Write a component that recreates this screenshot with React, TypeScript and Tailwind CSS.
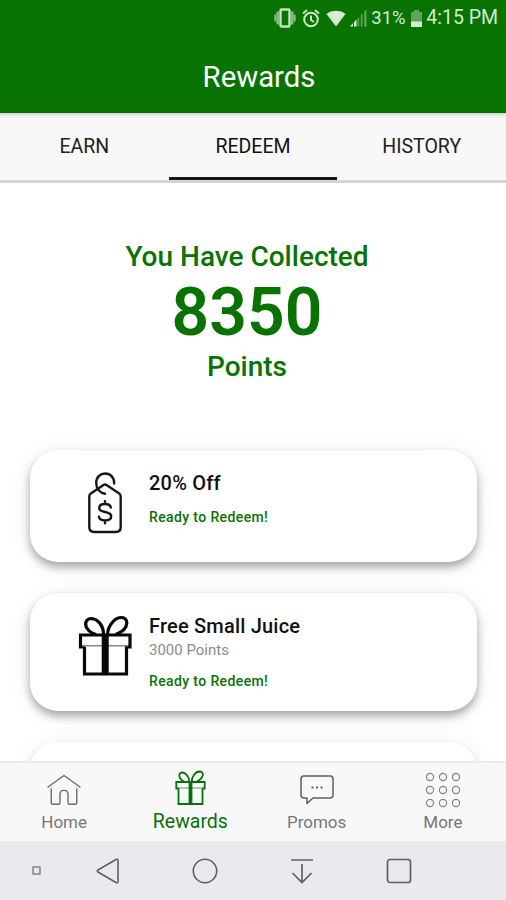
import React from 'react';

const tabs = [
  { id: 'earn', label: 'EARN' },
  { id: 'redeem', label: 'REDEEM' },
  { id: 'history', label: 'HISTORY' }
];

const rewards = [
  { id: 1, title: '20% Off', points: '', icon: 'tag', height: 'h-28' },
  { id: 2, title: 'Free Small Juice', points: '3000 Points', icon: 'gift', height: 'h-[118px]' }
];

const TagIcon: React.FC = () => (
  <svg width="34" height="62" viewBox="0 0 34 62" fill="none" stroke="#161616" strokeWidth="2.4" strokeLinecap="round" strokeLinejoin="round">
    <path d="M15.500 13 2.800 21.400c-1 .7-1.500 1.600-1.500 2.800V55c0 3.200 1.800 5 5 5h21.400c3.200 0 5-1.800 5-5V24.200c0-1.200-.5-2.100-1.500-2.800L18.500 13c-1.200-.8-1.800-.8-3 0Z" />
    <path d="M17 21.800c-5-1-8.800-5-8.800-10.800 0-5.800 3.900-9.500 9-9.500 5 0 9 3.700 9 10" />
    <path d="M22.800 35.500c-.4-2.300-2.500-3.500-5.800-3.500-3.500 0-5.800 1.500-5.800 4 0 5.700 12 2.300 12 8.300 0 2.700-2.500 4.200-6.200 4.200s-5.600-1.200-6.100-3.700M17 29.300V32M17 48.500v2.700" />
  </svg>
);

const GiftIcon: React.FC = () => (
  <svg width="54" height="62" viewBox="0 0 54 62" fill="none" stroke="#080808" strokeWidth="3.2">
    <path d="M7 32H2.500V20h49.500v12h-5" />
    <path d="M6.500 32v27h42V32" />
    <path d="M4 30.800h46" stroke="#888" strokeWidth="1.400" />
    <path d="M27.200 20v39" strokeWidth="7" />
    <path d="M25.500 19.500C25.500 10 19.500 4 13.500 3.500 8 3.500 6.500 8.500 8.500 12.500c2 3.500 5.500 6 9.500 7M29.500 19.500C30 10 37 2.500 43.500 2.500c5 0 6.500 5 4.500 9C46 15.500 42 18 37.500 19.500" />
  </svg>
);

const SmallGiftIcon: React.FC = () => (
  <svg width="31" height="36" viewBox="0 0 31 36" fill="none" stroke="#08700a" strokeWidth="1.800">
    <path d="M4 18.500H1.300v-6.500h28.400v6.500H27" />
    <path d="M3.500 18.500V34h24V18.500" />
    <path d="M3 18h25" stroke="#5d9c5b" strokeWidth="1" />
    <path d="M15.500 12v22" strokeWidth="3.800" />
    <path d="M14.300 12C14.300 7 11 3 7.500 2.500 4.500 2.300 3.500 5.500 5 8c1.200 2 3 3.300 5 4M16.700 12c0-6 4-10.500 8-10.500 3 0 4 3 2.500 5.500C25.900 9.200 24 11 21 12" />
  </svg>
);

const HomeIcon: React.FC = () => (
  <svg width="34" height="32" viewBox="0 0 34 32" fill="none" stroke="#6c6c6c" strokeWidth="1.400" strokeLinecap="round" strokeLinejoin="round">
    <path d="M1 13 17 1.500 33 13" />
    <path d="M4.200 15v13.500c0 1.200.6 1.800 1.800 1.800h5.500c1 0 1.500-.6 1.500-1.800v-8c0-5.500 8-5.500 8 0v8c0 1.200.5 1.800 1.500 1.800H28c1.200 0 1.800-.6 1.800-1.800V15" />
  </svg>
);

const ChatIcon: React.FC = () => (
  <svg width="36" height="32" viewBox="0 0 36 32" fill="none" stroke="#5f5f5f" strokeWidth="1.500" strokeLinejoin="round">
    <path d="M5 2h26c2 0 3 1 3 3v16c0 2-1 3-3 3H14l-6 5.500V24H5c-2 0-3-1-3-3V5c0-2 1-3 3-3Z" />
    <path d="M12.500 13.500h2M17 13.500h2M21.500 13.500h2" strokeWidth="2" />
  </svg>
);

const MoreIcon: React.FC = () => (
  <svg width="36" height="36" viewBox="0 0 36 36" fill="none" stroke="#858585" strokeWidth="1.200">
    {[5, 18, 31].map((y) => [5, 18, 31].map((x) => <circle key={`${x}-${y}`} cx={x} cy={y} r="3.600" />))}
  </svg>
);

const navItems = [
  { id: 'home', label: 'Home', icon: <HomeIcon /> },
  { id: 'rewards', label: 'Rewards', icon: <SmallGiftIcon />, active: true },
  { id: 'promos', label: 'Promos', icon: <ChatIcon /> },
  { id: 'more', label: 'More', icon: <MoreIcon /> }
];

const StatusBar: React.FC = () => (
  <div className="flex h-9 items-center justify-end pr-2 text-[19px] text-[#d5ead0]">
    <svg width="22" height="20" viewBox="0 0 22 20" fill="none" stroke="#c6e2c0">
      <rect x="6.500" y="1.500" width="9" height="17" rx="1" strokeWidth="2.400" />
      <path d="M3.700 3.500v13M18.300 3.500v13" strokeWidth="2.600" opacity=".65" />
      <path d="M1.300 6.500v7M20.700 6.500v7" strokeWidth="2" opacity=".65" />
    </svg>
    <svg className="ml-1.5" width="18" height="19" viewBox="0 0 18 19" fill="none" stroke="#cde6c8" strokeWidth="2">
      <circle cx="9" cy="10.500" r="6.800" />
      <path d="M1 4.500 5 1M17 4.500 13 1M9 6.500v4.500l3 2" />
    </svg>
    <svg className="ml-1.5" width="20" height="17" viewBox="0 0 20 17" fill="#d6ecd1">
      <path d="M.5 4C6-.2 14-.2 19.500 4L10 16.500Z" />
    </svg>
    <svg className="ml-1" width="17" height="18" viewBox="0 0 17 18" fill="#d6ecd1">
      <path d="M0 17.500 3 14v3.500zM4 13l2.500-2.500v7H4z" />
      <path d="M7.500 9.500 9.200 8v9.500H7.500zM10.800 6l1.700-1.700v13.200h-1.700zM14.200 2.500 16.500.5v17h-2.300z" opacity=".42" />
    </svg>
    <span className="ml-1 w-[35px] text-[18.5px] leading-none">31%</span>
    <svg className="ml-1" width="13" height="19" viewBox="0 0 13 19">
      <path d="M1 3h3V1h5v2h3v10H1z" fill="#62a45a" />
      <path d="M1 12.500h11V18H1z" fill="#d6ecd1" />
    </svg>
    <span className="ml-[3px] text-[19.5px] leading-none whitespace-nowrap">4:15 PM</span>
  </div>
);

const App: React.FC = () => {
  return (
    <div className="flex h-[900px] w-[506px] flex-col overflow-hidden bg-white font-['Roboto',sans-serif]">
      {/* Header */}
      <header className="h-[113px] shrink-0 bg-[#087300]">
        <StatusBar />
        <h1 className="pt-5 pl-3 text-center text-[29.300px] leading-[42px] text-white">Rewards</h1>
      </header>

      {/* Tabs */}
      <div className="flex h-[70px] shrink-0 border-b-[3px] border-[#d4d4d4] bg-[#f8f8f8] shadow-[inset_0_4px_3px_-2px_#d5d5d5]">
        {tabs.map((tab) => (
          <button
            key={tab.id}
            className={
              tab.id === 'redeem'
                ? 'flex-1 border-b-[3px] border-[#17171b] pt-1 text-[19.5px] text-[#111]'
                : 'flex-1 border-b-[3px] border-transparent pt-1 text-[19.5px] text-[#222]'
            }
          >
            {tab.label}
          </button>
        ))}
      </div>

      {/* Points and rewards */}
      <main className="min-h-0 flex-1 overflow-hidden px-[30px] pt-14">
        <div className="mr-3 flex flex-col items-center font-medium text-[#087300]">
          <p className="text-[28px] leading-9">You Have Collected</p>
          <p className="pt-0.5 text-[66px] leading-[72px] font-semibold">8350</p>
          <p className="text-[28px] leading-9">Points</p>
        </div>

        <div className="mt-[65px] flex w-[447px] flex-col gap-[31px]">
          {rewards.map((reward) => (
            <div
              key={reward.id}
              className={`${reward.height} flex rounded-[28px] bg-white shadow-[0_5px_8px_rgba(0,0,0,0.32),0_3px_24px_rgba(0,0,0,0.07)]`}
            >
              <div className="flex w-[119px] justify-center pt-[22px] pl-[30px]">
                {reward.icon === 'tag' ? <TagIcon /> : <GiftIcon />}
              </div>
              <div className="pt-[21px]">
                <h2 className="text-[20px] leading-6 font-medium tracking-[0.2px] text-[#111]">{reward.title}</h2>
                {reward.points && <p className="mt-px text-[15px] leading-[22px] text-[#8c8c8c]">{reward.points}</p>}
                <p className={reward.points ? 'mt-2.5 text-[14px] leading-5 font-medium tracking-[0.38px] text-[#087300]' : 'mt-3 text-[14px] leading-5 font-medium tracking-[0.38px] text-[#087300]'}>
                  Ready to Redeem!
                </p>
              </div>
            </div>
          ))}
          <div className="h-28 rounded-[28px] bg-white shadow-[0_5px_8px_rgba(0,0,0,0.16),0_3px_24px_rgba(0,0,0,0.07)]" />
        </div>
      </main>

      {/* Bottom navigation */}
      <nav className="z-10 flex h-20 shrink-0 border-t-2 border-[#ebebeb] bg-[#f8f8f8] pl-px">
        {navItems.map((item) => (
          <div key={item.id} className="flex flex-1 flex-col items-center pt-1.5">
            <div className={item.active ? 'flex h-[39px] items-start pt-px' : 'flex h-[42px] items-center'}>{item.icon}</div>
            <span className={item.active ? 'text-[19.5px] leading-7 text-[#08700a]' : 'text-[17px] leading-[22px] text-[#777]'}>
              {item.label}
            </span>
          </div>
        ))}
      </nav>

      {/* Android buttons */}
      <div className="flex h-[59px] shrink-0 items-center bg-[#e8eaed] pl-8">
        <svg width="9" height="9" viewBox="0 0 9 9" fill="none" stroke="#777" strokeWidth="1.300">
          <rect x="1" y="1" width="7" height="7" />
        </svg>
        <svg className="ml-[55px]" width="24" height="26" viewBox="0 0 24 26" fill="none" stroke="#606060" strokeWidth="1.600" strokeLinejoin="round">
          <path d="M20 1.500 2 12c-1 .7-1 1.400 0 2l18 10.500c1.200.6 2 .2 2-1V2.500c0-1.200-.8-1.600-2-1Z" />
        </svg>
        <svg className="ml-[72px]" width="26" height="26" viewBox="0 0 26 26" fill="none" stroke="#606060" strokeWidth="1.600">
          <circle cx="13" cy="13" r="11.700" />
        </svg>
        <svg className="ml-[73px]" width="22" height="26" viewBox="0 0 22 26" fill="none" stroke="#606060" strokeWidth="1.700">
          <path d="M0 2h22M11 6v18M1.500 15 11 24.500 20.500 15" />
        </svg>
        <svg className="ml-[73px]" width="26" height="26" viewBox="0 0 26 26" fill="none" stroke="#606060" strokeWidth="1.700">
          <rect x="1.500" y="1.500" width="23" height="23" rx="2.500" />
        </svg>
      </div>
    </div>
  );
};

export default App;
